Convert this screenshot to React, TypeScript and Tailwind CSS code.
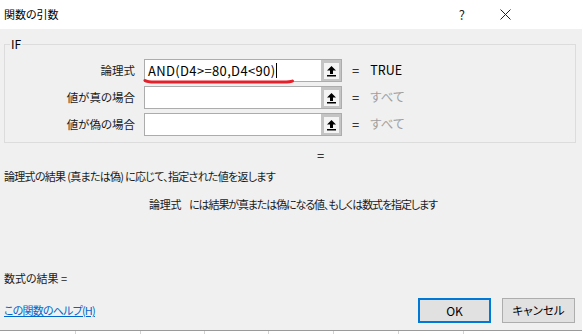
import React from 'react';

const font = "[font-family:'Noto_Sans_CJK_JP','Noto_Sans',sans-serif] [font-feature-settings:'palt']";

const RefButton = () => (
  <div className="w-[20px] h-full bg-[#c4c4c4] flex items-center justify-center">
    <div className="w-[15px] h-[16px] bg-[#f4f4f4] flex items-center justify-center">
      <svg width="11" height="12" viewBox="0 0 11 12">
        <path d="M5.5 1 L10 5.5 L7 5.5 L7 9 L4 9 L4 5.5 L1 5.5 Z" fill="#000" />
        <rect x="1" y="10" width="9" height="1.5" fill="#000" />
      </svg>
    </div>
  </div>
);

const ArgRow = ({ label, value, result, muted }: { label: string; value?: string; result: string; muted?: boolean }) => (
  <div className="flex items-center h-[23px]">
    <div className="w-[131px] text-right text-[11.5px] text-[#1a1a1a] pr-[1px]">{label}</div>
    <div className="ml-[8px] w-[198px] h-full flex border border-[#acacac] bg-white">
      <div className="flex-1 flex items-center pl-[3px] text-[13px] text-black tracking-[0.35px]">
        {value}
        {value && <span className="inline-block w-[1px] h-[15px] bg-black ml-[1px]" />}
      </div>
      <RefButton />
    </div>
    <div className="ml-[10px] text-[13px] text-black">=</div>
    <div className={`ml-[11px] text-[12.5px] ${muted ? 'text-[#a0a0a0]' : 'text-black'}`}>{result}</div>
  </div>
);

export default function App() {
  return (
    <div className={`w-[582px] h-[334px] bg-[#f0f0f0] flex flex-col overflow-hidden ${font}`}>
      {/* title bar */}
      <div className="h-[29px] bg-white flex items-center pl-[4px] shrink-0">
        <span className="text-[11px] text-black">関数の引数</span>
        <span className="ml-auto text-[13px] text-[#222]">?</span>
        <svg className="ml-[35px] mr-[71px]" width="11" height="11" viewBox="0 0 11 11">
          <path d="M0.5 0.5 L10.5 10.5 M10.5 0.5 L0.5 10.5" stroke="#222" strokeWidth="1" />
        </svg>
      </div>

      {/* IF group */}
      <fieldset className="mx-[4px] mt-[8px] h-[106px] border border-[#dcdcdc] px-0 pb-0 pt-[8px] relative w-[572px]">
        <legend className="ml-[5px] px-[1px] text-[12px] text-black leading-[14px]">IF</legend>
        <div className="flex flex-col gap-[4px] relative">
          <ArgRow label="論理式" value="AND(D4>=80,D4<90)" result="TRUE" />
          <ArgRow label="値が真の場合" result="すべて" muted />
          <ArgRow label="値が偽の場合" result="すべて" muted />
          {/* red annotation underline */}
          <svg className="absolute left-[138px] top-[19px]" width="152" height="8" viewBox="0 0 152 8">
            <path d="M2 2.5 Q4 4 12 4 L140 4 Q148 4 149.5 3" stroke="#e4202a" strokeWidth="3" fill="none" strokeLinecap="round" />
          </svg>
        </div>
      </fieldset>

      <div className="h-[16px] mt-[5px] pl-[317px] text-[13px] leading-[16px] text-black">=</div>
      <div className="mt-[4px] pl-[4px] text-[11px] leading-[16px] text-[#1a1a1a] tracking-[-0.7px]">
        論理式の結果 (真または偽) に応じて、指定された値を返します
      </div>
      <div className="mt-[12px] pl-[149px] text-[11px] leading-[16px] text-[#1a1a1a] flex tracking-[-1.1px]">
        <span className="tracking-[-0.3px]">論理式</span>
        <span className="ml-[8px]">には結果が真または偽になる値、もしくは数式を指定します</span>
      </div>

      <div className="mt-[58px] pl-[4px] text-[11px] leading-[16px] text-[#1a1a1a]">数式の結果 =</div>

      <div className="mt-[12px] flex items-center pl-[4px]">
        <span className="text-[11px] text-[#0066cc] underline tracking-[-0.8px]">この関数のヘルプ(H)</span>
        <button className="ml-auto w-[73px] h-[25px] border-2 border-[#0078d7] bg-[#e1e1e1] text-[12px] text-black">OK</button>
        <button className="ml-[11px] mr-[7px] w-[73px] h-[25px] border border-[#adadad] bg-[#e1e1e1] text-[11.5px] text-black">キャンセル</button>
      </div>

      {/* spreadsheet edge below dialog */}
      <div className="mt-auto h-[4px] border-t border-[#9a9a9a] bg-white flex shrink-0">
        {[76, 65, 64, 64, 65, 65, 65].map((w, i) => (
          <div key={i} className="h-full border-r border-[#d4d4d4]" style={{ width: w }} />
        ))}
      </div>
    </div>
  );
}
